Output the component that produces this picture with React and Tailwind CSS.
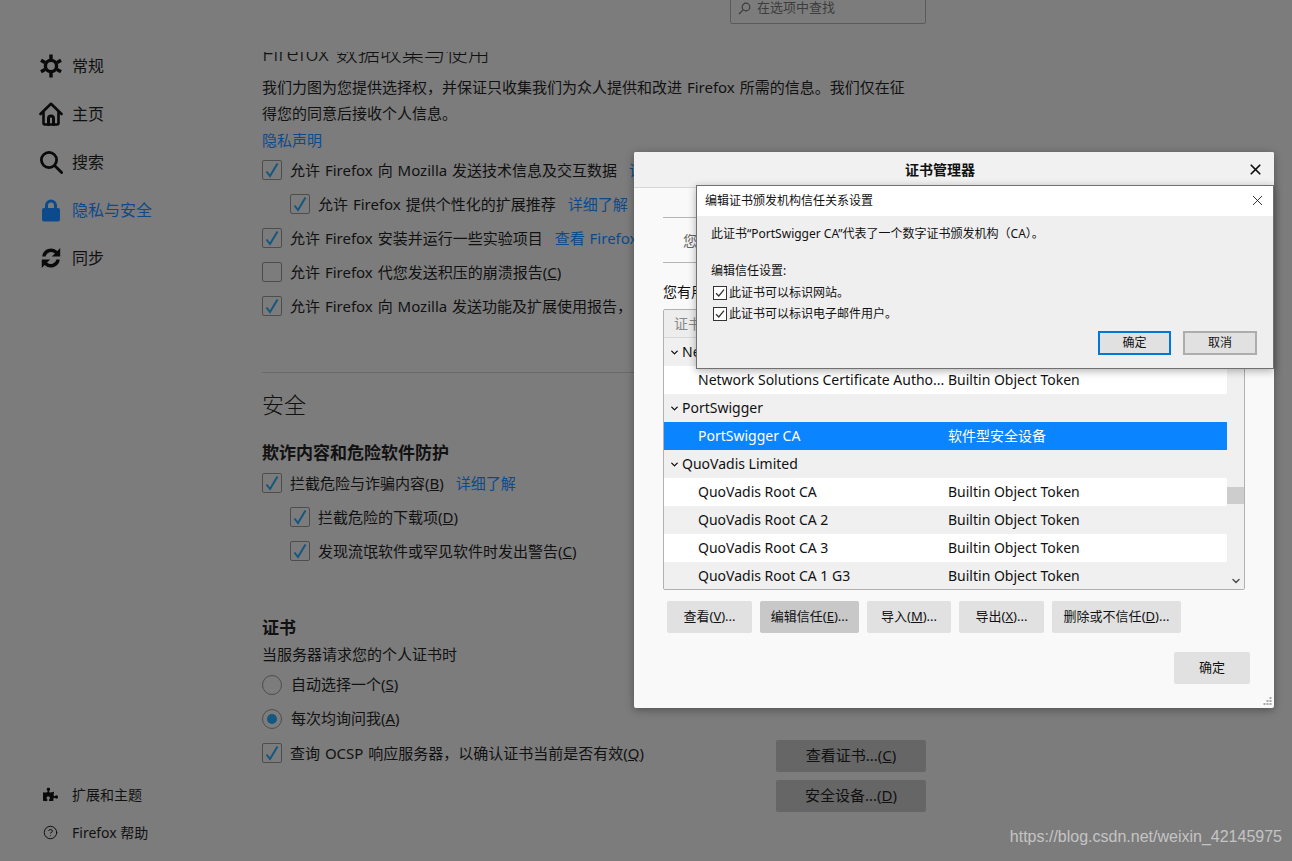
import React from 'react';
import { CircleHelp, ChevronDown, X } from 'lucide-react';
import { FaPuzzlePiece } from 'react-icons/fa';

const GearIcon = () => (
  <svg width="24" height="24" viewBox="0 0 24 24" fill="none" stroke="#0a0a0a">
    <circle cx="12" cy="12" r="5.6" strokeWidth="3.4" />
    <g strokeWidth="3.4" strokeLinecap="butt">
      <path d="M12 0.5v4.5M12 19v4.5M2 6.2l3.9 2.3M18.1 15.5l3.9 2.3M2 17.8l3.9-2.3M18.1 8.5l3.9-2.3" />
    </g>
  </svg>
);

const HomeIcon = () => (
  <svg width="24" height="24" viewBox="0 0 24 24" fill="none" stroke="#0a0a0a" strokeWidth="2.6" strokeLinejoin="round" strokeLinecap="round">
    <path d="M1.5 12 12 1.8 22.5 12" />
    <path d="M4.5 10.5V21a1.5 1.5 0 0 0 1.5 1.5h12a1.5 1.5 0 0 0 1.5-1.5V10.5" />
    <path d="M9.5 22.5v-6a2.5 2.5 0 0 1 5 0v6" strokeWidth="3" />
  </svg>
);

const SearchIcon = () => (
  <svg width="24" height="24" viewBox="0 0 24 24" fill="none" stroke="#0a0a0a" strokeWidth="2.8" strokeLinecap="round">
    <circle cx="10" cy="10" r="7.6" />
    <path d="M15.8 15.8 22.6 22.6" />
  </svg>
);

const LockIcon = () => (
  <svg width="24" height="24" viewBox="0 0 24 24" fill="#0c4a8c">
    <path d="M6 10V7.5a6 6 0 0 1 12 0V10h-3V7.5a3 3 0 0 0-6 0V10z" />
    <rect x="3" y="10" width="18" height="13.5" rx="2" />
  </svg>
);

const SyncIcon = () => (
  <svg width="24" height="24" viewBox="0 0 24 24" fill="#0a0a0a">
    <path d="M3.2 10.5A9 9 0 0 1 18.4 5l2.8-3v8.5h-8.4l3.2-3a5.6 5.6 0 0 0-9.4 3z" />
    <path d="M20.8 13.5A9 9 0 0 1 5.6 19l-2.8 3v-8.5h8.4l-3.2 3a5.6 5.6 0 0 0 9.4-3z" />
  </svg>
);

const navItems = [
  { icon: <GearIcon />, label: '常规' },
  { icon: <HomeIcon />, label: '主页' },
  { icon: <SearchIcon />, label: '搜索' },
  { icon: <LockIcon />, label: '隐私与安全', active: true },
  { icon: <SyncIcon />, label: '同步' },
];

function Check({ checked }) {
  return (
    <span className="w-5 h-5 shrink-0 rounded-[2px] border border-[#4d4d4d] flex items-center justify-center">
      {checked && (
        <svg width="14" height="16" viewBox="0 0 14 16" fill="none" stroke="#14577f" strokeWidth="2">
          <path d="M1.5 9.5 5 14 12.5 1.5" />
        </svg>
      )}
    </span>
  );
}

function Row({ checked = true, nested, children }) {
  return (
    <div className={`h-[34px] flex items-center whitespace-nowrap ${nested ? 'pl-7' : ''}`}>
      <Check checked={checked} />
      <span className="ml-2">{children}</span>
    </div>
  );
}

function Radio({ checked, children }) {
  return (
    <div className="h-[34px] flex items-center whitespace-nowrap">
      <span className="w-5 h-5 shrink-0 rounded-full border border-[#4d4d4d] flex items-center justify-center">
        {checked && <span className="w-[10px] h-[10px] rounded-full bg-[#14577f]" />}
      </span>
      <span className="ml-[9px] -mt-[2px]">{children}</span>
    </div>
  );
}

const Link = ({ children, className = '' }) => <span className={`text-[#0c4a8c] ${className}`}>{children}</span>;

const groups = [
  { label: 'Ne', group: true },
  { label: 'Network Solutions Certificate Autho...', token: 'Builtin Object Token' },
  { label: 'PortSwigger', group: true },
  { label: 'PortSwigger CA', token: '软件型安全设备', selected: true },
  { label: 'QuoVadis Limited', group: true },
  { label: 'QuoVadis Root CA', token: 'Builtin Object Token' },
  { label: 'QuoVadis Root CA 2', token: 'Builtin Object Token' },
  { label: 'QuoVadis Root CA 3', token: 'Builtin Object Token' },
  { label: 'QuoVadis Root CA 1 G3', token: 'Builtin Object Token' },
];

function TreeRow({ row, index }) {
  if (row.group) {
    return (
      <div className="h-7 pb-[2px] flex items-center bg-[#f0f0f0] text-[#111]">
        <ChevronDown size={11} strokeWidth={3} className="ml-[5px] mr-[2px] mt-[2px]" />
        <span>{row.label}</span>
      </div>
    );
  }
  let bg = index % 2 === 1 ? 'bg-white text-[#111]' : 'bg-[#f0f0f0] text-[#111]';
  if (row.selected) bg = 'bg-[#0a84ff] text-white';
  return (
    <div className={`h-7 pb-[2px] flex items-center pl-[34px] ${bg}`}>
      <span className="w-[250px]">{row.label}</span>
      <span>{row.token}</span>
    </div>
  );
}

const certButtons = [
  { w: 'w-[85px]', label: '查看', key: 'V' },
  { w: 'w-[99px]', label: '编辑信任', key: 'E', active: true },
  { w: 'w-[84px]', label: '导入', key: 'M' },
  { w: 'w-[85px]', label: '导出', key: 'X' },
  { w: 'w-[129px]', label: '删除或不信任', key: 'D' },
];

function CertManager() {
  return (
    <div className="absolute left-[634px] top-[152px] w-[640px] h-[556px] bg-[#f9f9f9] rounded-[2px] shadow-[0_2px_8px_rgba(0,0,0,0.35)] overflow-hidden">
      <div className="h-[36px] bg-[#f1f1f1] border-b border-[#d7d7d7] flex items-center justify-center pr-7 relative">
        <span className="text-[14px] font-bold text-[#111]">证书管理器</span>
        <X size={17} strokeWidth={2.4} className="absolute right-[10px] top-[9px] text-[#111]" />
      </div>
      <div className="pl-[29px] pr-[29px]">
        <div className="mt-[29px] border-t border-b border-[#b5b5b5] h-[46px] flex items-center pl-5 text-[14px] text-[#666]">您</div>
        <div className="mt-[19px] text-[14px] leading-[20px] text-[#111]">您有用</div>
        <div className="mt-[7px] h-[281px] border border-[#b1b1b1] rounded-[2px] flex overflow-hidden text-[14px]">
          <div className="flex-1 min-w-0">
            <div className="h-7 bg-[#ededed] border-b border-[#d7d7d7] pl-[10px] flex items-center text-[#888]">证书</div>
            {groups.map((row, i) => <TreeRow key={i} row={row} index={i} />)}
          </div>
          <div className="w-[17px] bg-[#f0f0f0] flex flex-col items-center relative">
            <div className="absolute left-0 top-[177px] w-full h-[17px] bg-[#cdcdcd]" />
            <ChevronDown size={12} strokeWidth={3} className="absolute bottom-[2px] text-[#505050]" />
          </div>
        </div>
      </div>
      <div className="mt-[11px] pl-[33px] flex text-[13px] text-[#111] gap-2">
        {certButtons.map((b) => (
          <div key={b.key} className={`${b.w} h-8 rounded-[2px] flex items-center justify-center whitespace-nowrap ${b.active ? 'bg-[#c8c8c8]' : 'bg-[#e1e1e1]'}`}>
            {b.label}(<u>{b.key}</u>)...
          </div>
        ))}
      </div>
      <div className="mt-[19px] pr-6 flex justify-end">
        <div className="w-[76px] h-8 rounded-[2px] bg-[#e1e1e1] text-[13px] text-[#111] flex items-center justify-center">确定</div>
      </div>
      <svg className="absolute right-[2px] bottom-[2px]" width="9" height="9" viewBox="0 0 9 9" fill="#a8a8a8">
        <rect x="6.5" y="0" width="2" height="2" /><rect x="3.5" y="3" width="2" height="2" /><rect x="6.5" y="3" width="2" height="2" />
        <rect x="0.5" y="6" width="2" height="2" /><rect x="3.5" y="6" width="2" height="2" /><rect x="6.5" y="6" width="2" height="2" />
      </svg>
    </div>
  );
}

function SmallCheck({ children }) {
  return (
    <div className="h-[21px] flex items-center pl-[2px]">
      <span className="w-[14px] h-[14px] border border-[#333] bg-white flex items-center justify-center">
        <svg width="12" height="12" viewBox="0 0 12 12" fill="none" stroke="#333" strokeWidth="1.3"><path d="M2 6.2 4.8 9 10 2.6" /></svg>
      </span>
      <span className="ml-[2px]">{children}</span>
    </div>
  );
}

function TrustDialog() {
  return (
    <div className="absolute left-[696px] top-[185px] w-[578px] h-[184px] border border-[#707070] bg-[#efefef] shadow-[0_2px_8px_rgba(0,0,0,0.3)] text-[12px] text-[#111]">
      <div className="h-[30px] bg-white flex items-center justify-between pl-2 pr-[7px]">
        <span>编辑证书颁发机构信任关系设置</span>
        <X size={17} strokeWidth={1.2} className="-mt-[2px]" />
      </div>
      <div className="pl-[14px] pr-4 pt-2">
        <div className="h-5 flex items-center">此证书“PortSwigger CA”代表了一个数字证书颁发机构（CA）。</div>
        <div className="mt-[17px] h-5 flex items-center">编辑信任设置:</div>
        <div className="mt-px">
          <SmallCheck>此证书可以标识网站。</SmallCheck>
          <SmallCheck>此证书可以标识电子邮件用户。</SmallCheck>
        </div>
        <div className="mt-[7px] flex justify-end gap-3">
          <div className="w-[73px] h-6 border-2 border-[#0078d7] bg-[#e1e1e1] flex items-center justify-center">确定</div>
          <div className="w-[74px] h-6 border-2 border-[#adadad] bg-[#e1e1e1] flex items-center justify-center">取消</div>
        </div>
      </div>
    </div>
  );
}

export default function App() {
  return (
    <div className="relative w-[1292px] h-[861px] overflow-hidden bg-[#7c7c7c] flex text-[15px] text-[#111] font-['Noto_Sans','Noto_Sans_CJK_SC',sans-serif]">
      {/* sidebar */}
      <aside className="w-[262px] shrink-0 flex flex-col pl-[39px] pt-[42px] pb-[10px]">
        {navItems.map((item) => (
          <div key={item.label} className={`h-12 flex items-center gap-[9px] text-[16px] ${item.active ? 'text-[#0c4a8c]' : ''}`}>
            {item.icon}
            <span>{item.label}</span>
          </div>
        ))}
        <div className="mt-auto text-[14px] pl-[4px]">
          <div className="h-[38px] flex items-center">
            <FaPuzzlePiece size={15} className="text-[#0a0a0a]" />
            <span className="ml-[14px]">扩展和主题</span>
          </div>
          <div className="h-[38px] flex items-center">
            <CircleHelp size={15} strokeWidth={1.6} />
            <span className="ml-[14px]">Firefox 帮助</span>
          </div>
        </div>
      </aside>

      {/* preferences content */}
      <main className="w-[664px] shrink-0 flex flex-col h-full [word-spacing:1px]">
        <div className="h-[52px] shrink-0 flex justify-end">
          <div className="w-[196px] h-8 -mt-2 border border-[#5b5b5b] rounded-b-[2px] flex items-center pl-[7px] text-[13px] text-[#3c3c3c]">
            <svg width="13" height="13" viewBox="0 0 13 13" fill="none" stroke="#3c3c3c" strokeWidth="1.2"><circle cx="8" cy="5" r="3.8" /><path d="M5.2 7.8 1 12" /></svg>
            <span className="ml-[6px]">在选项中查找</span>
          </div>
        </div>
        <div className="flex-1 overflow-hidden">
          <h2 className="-mt-4 text-[22px] leading-[32px] font-light">Firefox 数据收集与使用</h2>
          <p className="mt-[6px] leading-[26px] w-[650px]">我们力图为您提供选择权，并保证只收集我们为众人提供和改进 Firefox 所需的信息。我们仅在征得您的同意后接收个人信息。</p>
          <div className="mt-[1px] h-[26px] flex items-center"><Link>隐私声明</Link></div>
          <div>
            <Row>允许 Firefox 向 Mozilla 发送技术信息及交互数据<Link className="ml-3">详细了解</Link></Row>
            <Row nested>允许 Firefox 提供个性化的扩展推荐<Link className="ml-3">详细了解</Link></Row>
            <Row>允许 Firefox 安装并运行一些实验项目<Link className="ml-3">查看 Firefox 实验</Link></Row>
            <Row checked={false}>允许 Firefox 代您发送积压的崩溃报告(<u>C</u>)</Row>
            <Row>允许 Firefox 向 Mozilla 发送功能及扩展使用报告，</Row>
          </div>
          <div className="mt-[49px] border-t border-[#6a6a6a]" />
          <h1 className="mt-[15px] text-[22px] leading-[32px] font-light">安全</h1>
          <h3 className="mt-[21px] text-[17px] leading-[24px] font-bold">欺诈内容和危险软件防护</h3>
          <div className="mt-px">
            <Row>拦截危险与诈骗内容(<u>B</u>)<Link className="ml-3">详细了解</Link></Row>
            <Row nested>拦截危险的下载项(<u>D</u>)</Row>
            <Row nested>发现流氓软件或罕见软件时发出警告(<u>C</u>)</Row>
          </div>
          <h3 className="mt-12 text-[17px] leading-[24px] font-bold">证书</h3>
          <p className="mt-[2px] leading-[24px]">当服务器请求您的个人证书时</p>
          <div className="mt-[2px]">
            <Radio>自动选择一个(<u>S</u>)</Radio>
            <Radio checked>每次均询问我(<u>A</u>)</Radio>
          </div>
          <div className="flex items-start justify-between">
            <Row>查询 OCSP 响应服务器，以确认证书当前是否有效(<u>Q</u>)</Row>
            <div className="flex flex-col gap-2 mt-[4px]">
              <div className="w-[150px] h-8 pb-[2px] rounded-[2px] bg-[#666666] flex items-center justify-center">查看证书...(<u>C</u>)</div>
              <div className="w-[150px] h-8 pb-[2px] rounded-[2px] bg-[#666666] flex items-center justify-center">安全设备...(<u>D</u>)</div>
            </div>
          </div>
        </div>
      </main>

      <CertManager />
      <TrustDialog />

      <span className="absolute right-[10px] bottom-[12px] text-[16px] text-[#c4c4c4] font-['Liberation_Sans',sans-serif]">https://blog.csdn.net/weixin_42145975</span>
    </div>
  );
}
